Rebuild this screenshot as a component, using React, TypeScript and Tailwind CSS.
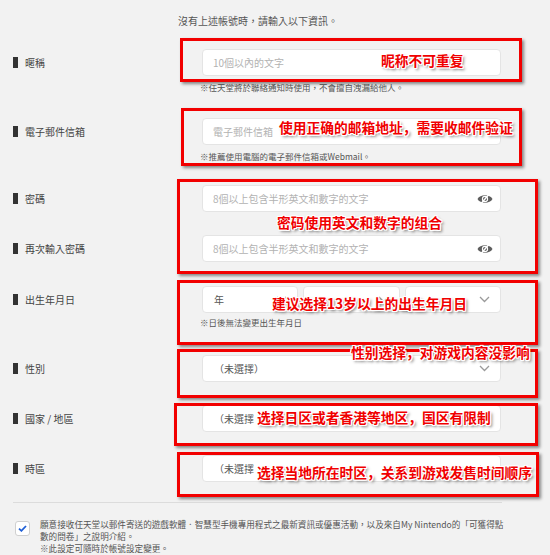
import type { ReactNode } from "react";
import clsx from "clsx";

const boxCls = "absolute border-[3px] border-[#f20000] shadow-[2px_2px_3px_rgba(0,0,0,0.45)]";
const noteCls =
  "absolute whitespace-nowrap font-['Noto_Sans_CJK_SC',sans-serif] text-[13.75px] font-bold leading-[16px] text-[#f00000] [text-shadow:1px_0_0_#fff,-1px_0_0_#fff,0_1px_0_#fff,0_-1px_0_#fff,1px_1px_0_#fff,-1px_-1px_0_#fff,1px_-1px_0_#fff,-1px_1px_0_#fff,2px_2px_3px_rgba(0,0,0,0.6)]";

function Chevron() {
  return (
    <svg width="11" height="7" viewBox="0 0 11 7" className="shrink-0">
      <path d="M1 1l4.5 4.5L10 1" fill="none" stroke="#9a9a9a" strokeWidth="1.3" />
    </svg>
  );
}

function EyeOff() {
  return (
    <svg width="16" height="12" viewBox="0 0 16 12" className="shrink-0">
      <path d="M0.5 6C3 1 13 1 15.5 6C13 11 3 11 0.5 6Z" fill="#5e5e5e" />
      <circle cx="8" cy="6" r="2.6" fill="none" stroke="#fff" strokeWidth="1.1" />
      <path d="M3.8 11L12.2 1" stroke="#fff" strokeWidth="1.4" />
    </svg>
  );
}

function Row({ label, className, children }: { label: string; className: string; children: ReactNode }) {
  return (
    <div className={clsx("flex", className)}>
      <div className="flex h-[27px] w-[202px] shrink-0 items-center gap-[7px] pl-[13px] text-[10px] text-[#444]">
        <span className="h-[11px] w-[5px] bg-[#333]" />
        {label}
      </div>
      <div className="w-[299px]">{children}</div>
    </div>
  );
}

function Field({ placeholder, eye }: { placeholder: string; eye?: boolean }) {
  return (
    <div className="flex h-[27px] items-center justify-between rounded-[4px] border border-[#e4e4e4] bg-white pl-[10px] pr-[7px] text-[10px] text-[#b2b2b2]">
      <span>{placeholder}</span>
      {eye && <EyeOff />}
    </div>
  );
}

function Select({ value, className }: { value?: string; className?: string }) {
  return (
    <div className={clsx("flex h-[27px] items-center justify-between rounded-[4px] border border-[#e4e4e4] bg-white pl-[11px] pr-[10px] text-[10px] text-[#555]", className)}>
      <span>{value}</span>
      <Chevron />
    </div>
  );
}

function Note({ children, className }: { children: ReactNode; className: string }) {
  return <p className={clsx("-ml-[2px] text-[8.5px] leading-[12px] text-[#555]", className)}>{children}</p>;
}

export default function App() {
  return (
    <div className="relative h-[555px] w-[550px] overflow-hidden bg-[#f2f2f2] font-['Noto_Sans_CJK_TC','Noto_Sans',sans-serif]">
      <p className="pl-[178px] pt-[14px] text-[10px] leading-[14px] text-[#555]">沒有上述帳號時，請輸入以下資訊。</p>

      <Row label="暱稱" className="mt-[21px]">
        <Field placeholder="10個以內的文字" />
        <Note className="mt-[5px]">※任天堂將於聯絡通知時使用，不會擅自洩漏給他人。</Note>
      </Row>
      <Row label="電子郵件信箱" className="mt-[25px]">
        <Field placeholder="電子郵件信箱" />
        <Note className="mt-[5px]">※推薦使用電腦的電子郵件信箱或Webmail。</Note>
      </Row>
      <Row label="密碼" className="mt-[23px]">
        <Field placeholder="8個以上包含半形英文和數字的文字" eye />
      </Row>
      <Row label="再次輸入密碼" className="mt-[23px]">
        <Field placeholder="8個以上包含半形英文和數字的文字" eye />
      </Row>
      <Row label="出生年月日" className="mt-[24px]">
        <div className="grid grid-cols-3 gap-[5px]">
          <Select value="年" />
          <Select />
          <Select />
        </div>
        <Note className="mt-[3px]">※日後無法變更出生年月日</Note>
      </Row>
      <Row label="性別" className="mt-[27px]">
        <Select value="（未選擇）" />
      </Row>
      <Row label="國家 / 地區" className="mt-[23px]">
        <Select value="（未選擇" />
      </Row>
      <Row label="時區" className="mt-[23px]">
        <Select value="（未選擇" />
      </Row>

      <div className="ml-[13px] mt-[20px] h-px w-[489px] bg-[#dcdcdc]" />

      <div className="mt-[15px] flex gap-[10px] pl-[15px]">
        <span className="mt-[3px] flex size-[15px] shrink-0 items-center justify-center rounded-[3px] border border-[#d0d0d0] bg-white">
          <svg width="9" height="7" viewBox="0 0 9 7">
            <path d="M1 3.6l2.4 2.2L8 1" fill="none" stroke="#1f5fd6" strokeWidth="1.8" />
          </svg>
        </span>
        <div className="whitespace-nowrap text-[8.6px] leading-[12px] text-[#555]">
          <p>願意接收任天堂以郵件寄送的遊戲軟體．智慧型手機專用程式之最新資訊或優惠活動，以及來自My Nintendo的「可獲得點</p>
          <p>數的問卷」之說明介紹。</p>
          <p>※此設定可隨時於帳號設定變更。</p>
        </div>
      </div>

      <div className="pointer-events-none absolute inset-0">
        <div className={clsx(boxCls, "left-[180px] top-[38px] h-[44px] w-[342px]")} />
        <div className={clsx(boxCls, "left-[181px] top-[108px] h-[58px] w-[341px]")} />
        <div className={clsx(boxCls, "left-[177px] top-[179px] h-[95px] w-[361px]")} />
        <div className={clsx(boxCls, "left-[177px] top-[280px] h-[65px] w-[361px]")} />
        <div className={clsx(boxCls, "left-[177px] top-[349px] h-[49px] w-[361px]")} />
        <div className={clsx(boxCls, "left-[174px] top-[403px] h-[43px] w-[364px]")} />
        <div className={clsx(boxCls, "left-[177px] top-[452px] h-[45px] w-[362px]")} />

        <span className={clsx(noteCls, "left-[381px] top-[52px]")}>昵称不可重复</span>
        <span className={clsx(noteCls, "left-[279px] top-[119px]")}>使用正确的邮箱地址，需要收邮件验证</span>
        <span className={clsx(noteCls, "left-[277px] top-[214px]")}>密码使用英文和数字的组合</span>
        <span className={clsx(noteCls, "left-[272px] top-[295px]")}>建议选择13岁以上的出生年月日</span>
        <span className={clsx(noteCls, "left-[351px] top-[344px]")}>性别选择，对游戏内容没影响</span>
        <span className={clsx(noteCls, "left-[257px] top-[409px]")}>选择日区或者香港等地区，国区有限制</span>
        <span className={clsx(noteCls, "left-[257px] top-[464px]")}>选择当地所在时区，关系到游戏发售时间顺序</span>
      </div>
    </div>
  );
}
